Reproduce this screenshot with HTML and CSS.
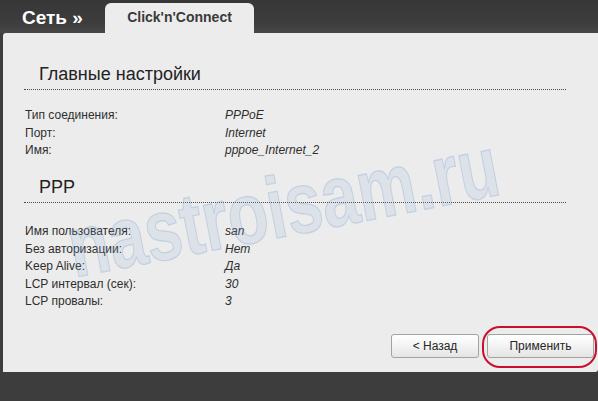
FILE: index.html
```html
<!DOCTYPE html>
<html lang="ru">
<head>
<meta charset="utf-8">
<title>Click'n'Connect</title>
<link rel="stylesheet" href="styles.css">
</head>
<body>
<div class="page">
  <header class="topbar">
    <div class="crumb">Сеть »</div>
    <div class="tab">Click'n'Connect</div>
  </header>
  <main class="panel">
    <section class="group">
      <h2 class="group-title">Главные настройки</h2>
      <div class="rows">
        <div class="row"><span class="label">Тип соединения:</span><span class="value">PPPoE</span></div>
        <div class="row"><span class="label">Порт:</span><span class="value">Internet</span></div>
        <div class="row"><span class="label">Имя:</span><span class="value">pppoe_Internet_2</span></div>
      </div>
    </section>
    <section class="group group-second">
      <h2 class="group-title">PPP</h2>
      <div class="rows rows-second">
        <div class="row"><span class="label">Имя пользователя:</span><span class="value">san</span></div>
        <div class="row"><span class="label">Без авторизации:</span><span class="value">Нет</span></div>
        <div class="row"><span class="label">Keep Alive:</span><span class="value">Да</span></div>
        <div class="row"><span class="label">LCP интервал (сек):</span><span class="value">30</span></div>
        <div class="row"><span class="label">LCP провалы:</span><span class="value">3</span></div>
      </div>
    </section>
    <div class="actions">
      <button class="btn btn-back">&lt; Назад</button>
      <span class="highlight-wrap">
        <button class="btn btn-apply">Применить</button>
        <span class="highlight"></span>
      </span>
    </div>
    <div class="watermark">nastroisam.ru</div>
  </main>
</div>
</body>
</html>
```

FILE: styles.css
```css
* { box-sizing: border-box; }
html, body {
  margin: 0;
  padding: 0;
}
body {
  width: 598px;
  height: 401px;
  overflow: hidden;
  background: #3d3d3d;
  font-family: "Liberation Sans", Arial, sans-serif;
}
.page {
  display: flex;
  flex-direction: column;
  height: 401px;
}
.topbar {
  height: 33px;
  display: flex;
  align-items: flex-end;
  background: linear-gradient(#373737, #3d3d3d 70%, #474747);
}
.crumb {
  color: #ffffff;
  font-weight: bold;
  font-size: 19px;
  line-height: 20px;
  padding-left: 22px;
  width: 105px;
  align-self: center;
  margin-top: 3px;
}
.tab {
  width: 149px;
  height: 30px;
  background: #ececec;
  border-radius: 6px 6px 0 0;
  color: #3a3a3a;
  font-weight: bold;
  font-size: 14px;
  text-align: center;
  padding-top: 6px;
  line-height: 16px;
}
.panel {
  position: relative;
  margin-left: 3px;
  height: 339px;
  background: #ececec;
  border-radius: 3px 0 3px 0;
  display: flex;
  flex-direction: column;
  padding: 31px 4px 14px 21px;
  overflow: hidden;
}
.group {
  margin-right: 28px;
}
.group-second {
  margin-top: 17.5px;
}
.group-title {
  margin: 0;
  font-weight: normal;
  font-size: 18px;
  line-height: 20px;
  color: #222;
  padding: 0 0 5px 15px;
  border-bottom: 1px dotted #4a4a4a;
}
.rows {
  margin-top: 17px;
  display: flex;
  flex-direction: column;
}
.rows-second {
  margin-top: 20px;
}
.row {
  display: flex;
  height: 17.5px;
  line-height: 17.5px;
  font-size: 12px;
  color: #2e2e2e;
}
.label {
  width: 201px;
  padding-left: 1px;
}
.value {
  font-style: italic;
}
.actions {
  margin-top: auto;
  display: flex;
  justify-content: flex-end;
  gap: 8px;
  position: relative;
  z-index: 2;
}
.btn {
  height: 24px;
  font-family: "Liberation Sans", Arial, sans-serif;
  font-size: 12px;
  color: #262626;
  background: linear-gradient(#ffffff, #f3f3f3 50%, #e4e4e4);
  border: 1px solid #a2a2a2;
  border-radius: 3px;
  padding: 0;
}
.btn-back { width: 88px; }
.btn-apply { width: 107px; display: block; }
.highlight-wrap {
  position: relative;
  display: block;
}
.highlight {
  position: absolute;
  left: -5px;
  top: -8px;
  right: -3px;
  bottom: -10px;
  border: 2px solid #c8102e;
  border-radius: 18px / 18px;
  pointer-events: none;
}
.watermark {
  position: absolute;
  left: 50px;
  top: 140px;
  width: 460px;
  text-align: center;
  font-family: "Liberation Sans", Arial, sans-serif;
  font-weight: bold;
  font-size: 66px;
  line-height: 66px;
  color: rgba(140, 175, 220, 0.16);
  -webkit-text-stroke: 1px rgba(120, 160, 210, 0.3);
  transform: rotate(-11deg) scaleY(1.32);
  pointer-events: none;
  z-index: 1;
  white-space: nowrap;
}
```
